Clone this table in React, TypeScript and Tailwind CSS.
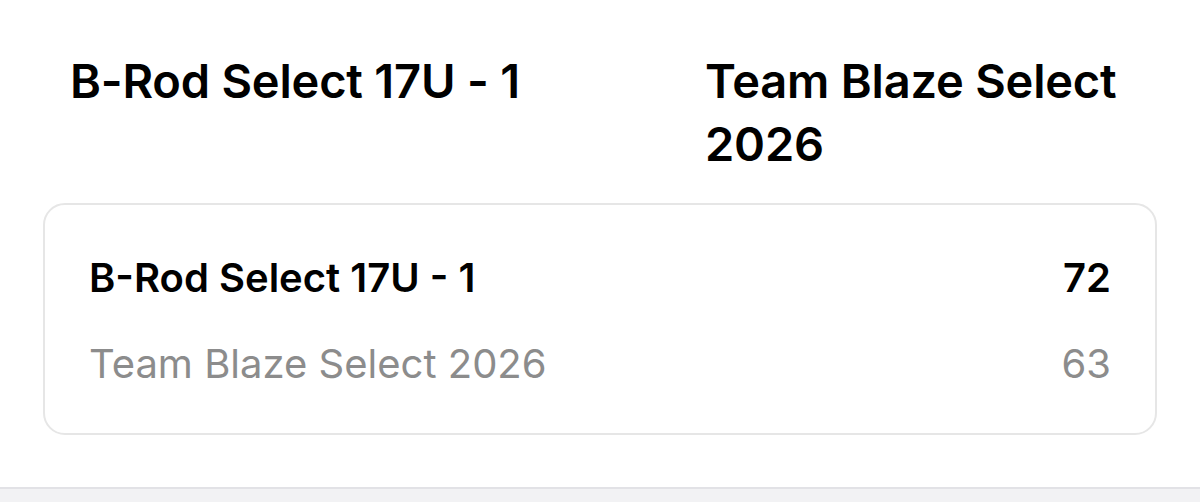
import React from "react";

export default function App() {
  return (
    <div
      className="w-[1200px] h-[502px] bg-white flex flex-col overflow-hidden"
      style={{ fontFamily: "Inter, 'Noto Sans', sans-serif" }}
    >
      <div className="grid grid-cols-[635px_1fr] pl-[70px] pr-[50px] pt-[49px] text-black">
        <div className="text-[47px] font-semibold leading-[63px] tracking-[-0.2px]">B-Rod Select 17U - 1</div>
        <div className="text-[47px] font-semibold leading-[63px] tracking-[-0.2px]">Team Blaze Select 2026</div>
      </div>
      <div className="mx-[43px] mt-[28px] h-[232px] rounded-[22px] border-2 border-[#e6e6e6] px-[44px] pt-[50px] flex flex-col gap-[40px]">
        <div className="flex justify-between items-center text-[40px] font-semibold leading-[46px] text-black">
          <span>B-Rod Select 17U - 1</span>
          <span>72</span>
        </div>
        <div className="flex justify-between items-center text-[40px] leading-[46px] text-[#8c8c8c]">
          <span>Team Blaze Select 2026</span>
          <span>63</span>
        </div>
      </div>
      <div className="flex-1" />
      <div className="h-[15px] border-t-2 border-[#e2e2e6] bg-[#f2f2f4]" />
    </div>
  );
}
